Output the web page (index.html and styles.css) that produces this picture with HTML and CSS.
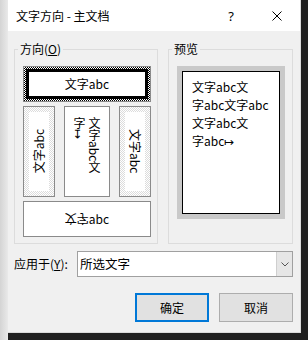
FILE: index.html
```html
<!DOCTYPE html>
<html lang="zh-CN">

<head>
    <meta charset="UTF-8">
    <meta name="viewport" content="width=device-width, initial-scale=1.0">
    <title>文字方向 - 主文档</title>
    <link rel="stylesheet" href="styles.css">
</head>

<body>
    <div class="screen">
        <div class="shadow-left"></div>

        <div class="dialog">
            <div class="titlebar">
                <span class="title">文字方向 - 主文档</span>
                <button class="tb-btn">?</button>
                <button class="tb-btn">
                    <svg width="10" height="10" viewBox="0 0 10 10">
                        <path d="M0.5 0.5L9.5 9.5M9.5 0.5L0.5 9.5" stroke="#000" stroke-width="1" fill="none" />
                    </svg>
                </button>
            </div>

            <div class="content">
                <div class="groups">
                    <fieldset class="group group-dir">
                        <legend>方向(<u>O</u>)</legend>
                        <div class="dir dir-selected">
                            <div class="face">文字abc</div>
                        </div>
                        <div class="dir-row">
                            <div class="dir dir-dither">
                                <div class="face"><span class="text-up">文字abc</span></div>
                            </div>
                            <div class="dir">
                                <div class="face face-top"><span class="text-vert">文字abc文<br>字↦</span></div>
                            </div>
                            <div class="dir dir-dither">
                                <div class="face"><span class="text-down">文字abc</span></div>
                            </div>
                        </div>
                        <div class="dir dir-wide">
                            <div class="face"><span class="flip">文字</span>abc</div>
                        </div>
                    </fieldset>

                    <fieldset class="group group-preview">
                        <legend>预览</legend>
                        <div class="preview-frame">
                            <div class="page">文字abc文<br>字abc文字abc<br>文字abc文<br>字abc↦</div>
                        </div>
                    </fieldset>
                </div>

                <div class="apply-row">
                    <label class="apply-label">应用于(<u>Y</u>):</label>
                    <div class="combo">
                        <span class="combo-text">所选文字</span>
                        <span class="combo-arrow">
                            <svg width="8" height="5" viewBox="0 0 8 5">
                                <path d="M0.5 0.5L4 4L7.5 0.5" stroke="#555" stroke-width="1" fill="none" />
                            </svg>
                        </span>
                    </div>
                </div>

                <div class="buttons">
                    <button class="btn btn-default">确定</button>
                    <button class="btn">取消</button>
                </div>
            </div>
        </div>
    </div>
</body>

</html>
```

FILE: styles.css
```css
* {
    padding: 0;
    margin: 0;
    box-sizing: border-box;
}

body {
    background-color: #202020;
    color: #000;
    font-family: "Noto Sans CJK SC", "Noto Sans", sans-serif;
    font-size: 12px;
    line-height: 16px;
    overflow: hidden;
}

/* Fundo atrás da janela */
.screen {
    display: flex;
    align-items: flex-start;
    width: 308px;
    height: 340px;
}

.shadow-left {
    width: 8px;
    height: 340px;
    background: linear-gradient(to right, #d4d4d4, #e9e9e9);
}

/* Janela do diálogo */
.dialog {
    width: 293px;
    height: 333px;
    background-color: #f0f0f0;
    border-right: 1px solid #dadada;
    border-bottom: 1px solid #dadada;
}

.titlebar {
    display: flex;
    align-items: center;
    height: 31px;
    padding-left: 8px;
    background-color: #fff;
}

.title {
    flex: 1;
}

.tb-btn {
    display: flex;
    align-items: center;
    justify-content: center;
    width: 46px;
    height: 31px;
    border: none;
    background: none;
    font-family: "Noto Sans", sans-serif;
    font-size: 13px;
    color: #000;
}

.content {
    padding: 10px 7px 0 6px;
}

/* Caixas de grupo */
.groups {
    display: flex;
    gap: 10px;
}

.group {
    border: 1px solid #dcdcdc;
    min-width: 0;
    padding: 9px 6px 6px 8px;
}

.group legend {
    padding: 0 2px;
    margin-left: -5px;
    line-height: 16px;
}

.group-dir {
    width: 144px;
}

.group-preview {
    width: 125px;
}

/* Botões de direção */
.dir {
    display: flex;
    height: 36px;
    border: 1px solid #8a8a8a;
    background-color: #fff;
}

.dir-selected {
    padding: 2px;
    background: repeating-conic-gradient(#000 0 25%, #fff 0 50%) 0 0 / 2px 2px;
}

.dir-selected .face {
    border: 3px solid #000;
}

.dir-dither {
    padding: 5px;
    background: repeating-conic-gradient(#dcdcdc 0 25%, #fff 0 50%) 0 0 / 2px 2px;
}

.face {
    flex: 1;
    display: flex;
    align-items: center;
    justify-content: center;
    background-color: #fff;
    white-space: nowrap;
}

.face-top {
    align-items: flex-start;
    padding-top: 10px;
}

.dir-row {
    display: grid;
    grid-template-columns: 32px 1fr 32px;
    gap: 9px;
    margin: 4px 0;
}

.dir-row .dir {
    height: 91px;
}

.text-up {
    writing-mode: vertical-rl;
    text-orientation: sideways;
    transform: rotate(180deg);
}

.text-down {
    writing-mode: vertical-rl;
    text-orientation: sideways;
}

.text-vert {
    writing-mode: vertical-rl;
    line-height: 15px;
}

.flip {
    display: inline-block;
    transform: scaleY(-1);
}

/* Pré-visualização */
.preview-frame {
    width: 108px;
    height: 153px;
    padding: 5px;
    background-color: #c9c9c9;
}

.page {
    height: 100%;
    border: 1px solid #000;
    background-color: #fff;
    padding: 6px 0 0 9px;
    line-height: 18px;
    white-space: nowrap;
}

/* Aplicar a */
.apply-row {
    display: flex;
    align-items: center;
    margin-top: 7px;
}

.apply-label {
    width: 63px;
}

.combo {
    display: flex;
    width: 216px;
    height: 26px;
    border: 1px solid #a0a0a0;
    background-color: #fff;
}

.combo-text {
    flex: 1;
    padding-left: 2px;
    line-height: 24px;
    font-size: 12.5px;
}

.combo-arrow {
    display: flex;
    align-items: center;
    justify-content: center;
    width: 16px;
    background-color: #e6e6e6;
    border-left: 1px solid #cfcfcf;
}

/* Botões */
.buttons {
    display: flex;
    justify-content: flex-end;
    gap: 10px;
    margin-top: 16px;
}

.btn {
    width: 74px;
    height: 29px;
    background-color: #e1e1e1;
    border: 1px solid #adadad;
    font-family: "Noto Sans CJK SC", sans-serif;
    font-size: 12px;
    color: #000;
}

.btn-default {
    border: 2px solid #0078d7;
}
```
